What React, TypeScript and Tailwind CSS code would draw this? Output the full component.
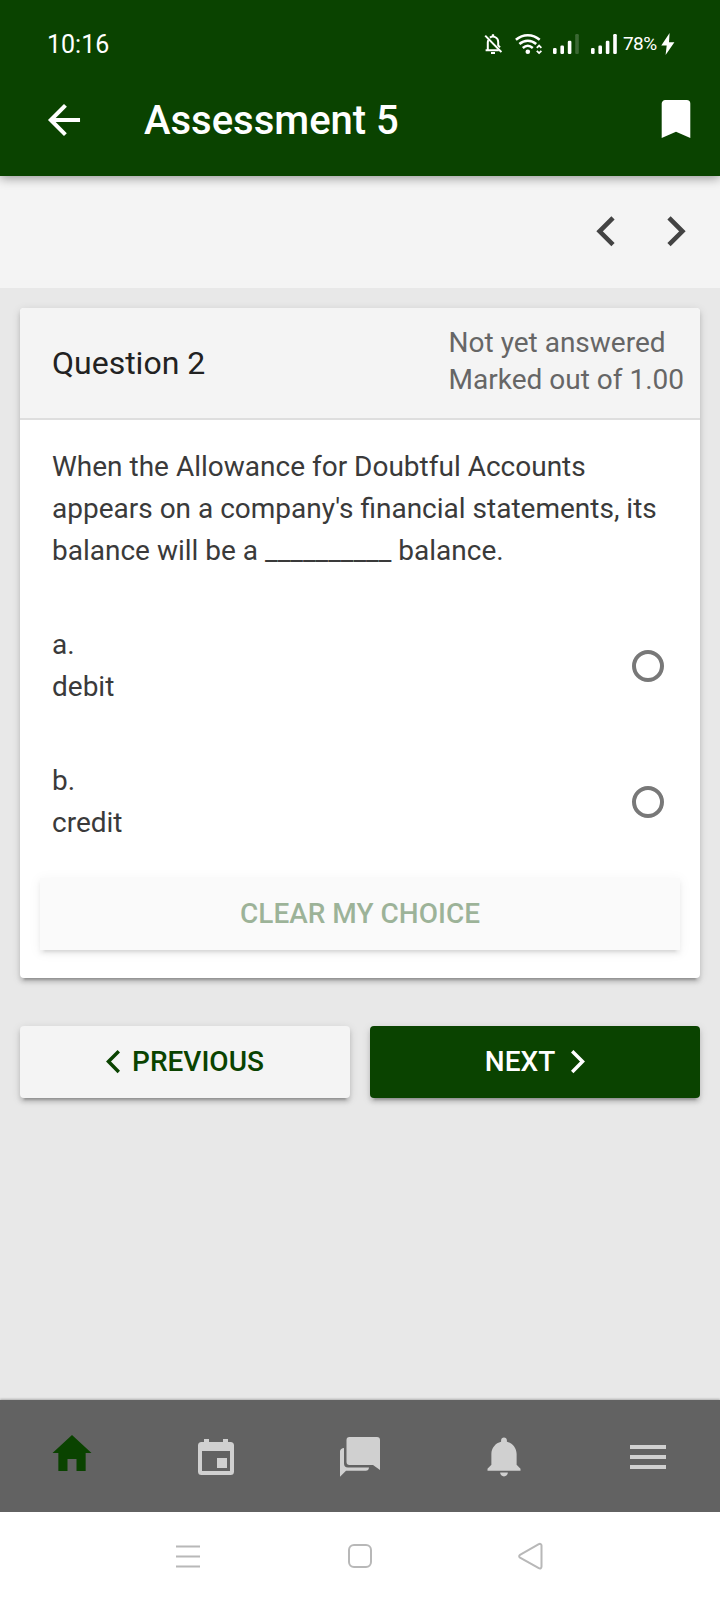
import { useState } from "react";
import type { ReactNode } from "react";
import clsx from "clsx";

const ANSWERS = [
  { letter: "a.", text: "debit" },
  { letter: "b.", text: "credit" },
];

const RAISED =
  "shadow-[0_4px_4px_rgba(0,0,0,0.14),0_6px_2px_-4px_rgba(0,0,0,0.2),0_2px_10px_rgba(0,0,0,0.12)]";

function Signal({ weak }: { weak?: boolean }) {
  return (
    <svg width="27" height="20" viewBox="0 0 27 20" fill="currentColor">
      <rect x="0" y="14" width="3.6" height="6" rx="1.2" />
      <rect x="7.4" y="11.5" width="3.6" height="8.5" rx="1.2" />
      <rect x="14.8" y="6.8" width="3.6" height="13.2" rx="1.2" />
      <rect
        x="22.2"
        y="0"
        width="3.6"
        height="20"
        rx="1.2"
        opacity={weak ? 0.2 : 1}
      />
    </svg>
  );
}

function Chevron({ dir, size }: { dir: "left" | "right"; size: "sm" | "lg" }) {
  const big = size === "lg";
  return (
    <svg
      width={big ? 19 : 14}
      height={big ? 32 : 24}
      viewBox={big ? "0 0 19 32" : "0 0 14 24"}
      fill="none"
      stroke="currentColor"
      strokeWidth={big ? 4.6 : 3.5}
      className={dir === "right" ? "-scale-x-100" : ""}
    >
      <path d={big ? "M17 1.9 3.6 15.3 17 28.700" : "M12.8 1.3 2.5 11.6l10.300 10.300"} />
    </svg>
  );
}

function StatusBar() {
  return (
    <div className="flex h-16 items-start justify-between pt-[33px] pr-[45px] pl-[47px] text-white">
      <span className="-mt-[3px] text-[25px] leading-[29px]">
        10:16
      </span>
      <div className="flex items-start">
        {/* muted bell */}
        <svg
          width="18"
          height="22"
          viewBox="0 0 18 22"
          fill="none"
          stroke="currentColor"
          strokeWidth="2"
          className="mr-[13px]"
        >
          <path d="M1.2 2.6 17.4 19" />
          <path d="M14.8 17.2H1.6M3.8 16.6V9.4c0-1 .2-1.8.6-2.5M5.9 4.6C9.6 2 14.2 4.8 14.2 9v3.4l1.8 2" />
          <path d="M9 3.6V1.2M7 20h4" strokeWidth="2.2" />
        </svg>
        <svg
          width="27"
          height="22"
          viewBox="0 0 27 22"
          fill="none"
          stroke="currentColor"
          strokeWidth="2.5"
          className="mr-[11px]"
        >
          <path d="M.9 6.8C8 .6 17.6.6 24.7 6.8" />
          <path d="M4.4 11C9.4 6.5 16.2 6.5 21.2 11" />
          <path d="M7.8 15c3.200-2.800 6.800-2.800 10 0" />
          <circle cx="12.8" cy="18.8" r="2.3" fill="currentColor" stroke="none" />
          <path d="m21.8 14.800 2.300-2.300 2.300 2.300M21.800 17.800l2.300 2.300 2.300-2.300" strokeWidth="1.8" />
        </svg>
        <div className="mt-px mr-[11px]">
          <Signal weak />
        </div>
        <div className="mt-px mr-[5px]">
          <Signal />
        </div>
        <span className="-mt-px w-[38px] text-[19px] leading-[23px] whitespace-nowrap tracking-[-0.6px]">
          78%
        </span>
        <svg width="14" height="22" viewBox="0 0 14 22" fill="currentColor">
          <path d="M8.6 0 .3 12.400H5.700L4.600 22 13.400 9.200H8z" />
        </svg>
      </div>
    </div>
  );
}

function Option({
  letter,
  text,
  checked,
  onSelect,
}: {
  letter: string;
  text: string;
  checked: boolean;
  onSelect: () => void;
}) {
  return (
    <label className="flex items-center justify-between py-[26px] pr-9 pl-8">
      <span>
        <span className="block">{letter}</span>
        <span className="block">{text}</span>
      </span>
      <input
        type="radio"
        name="answer"
        checked={checked}
        onChange={onSelect}
        className="sr-only"
      />
      <span className="flex h-8 w-8 items-center justify-center rounded-full border-4 border-[#787878]">
        {checked && <span className="h-4 w-4 rounded-full bg-[#0a4300]" />}
      </span>
    </label>
  );
}

function Tab({ active, children }: { active?: boolean; children: ReactNode }) {
  return (
    <button
      className={clsx(
        "flex flex-1 items-center justify-center",
        active ? "-translate-y-1 text-[#0a4300]" : "text-[#d0d0d0]",
      )}
    >
      {children}
    </button>
  );
}

function TabBar() {
  return (
    <nav className="flex h-28 bg-[#626262] pt-[2px] shadow-[0_-1px_2px_rgba(0,0,0,0.25)]">
      <Tab active>
        <svg width="48" height="48" viewBox="0 0 512 512" fill="currentColor">
          <path d="M208 448V320h96v128h97.600V256H464L256 64 48 256h62.400v192z" />
        </svg>
      </Tab>
      <Tab>
        <svg width="48" height="48" viewBox="0 0 48 48" fill="currentColor">
          <path
            fillRule="evenodd"
            d="M12 6h5v3h14V6h5v3h2.500A3.500 3.500 0 0 1 42 12.500v26a3.500 3.500 0 0 1-3.500 3.500h-29A3.500 3.500 0 0 1 6 38.500v-26A3.500 3.500 0 0 1 9.500 9H12zM10 18v20h28V18z"
          />
          <path d="M25 25h10v10H25z" />
        </svg>
      </Tab>
      <Tab>
        <svg width="48" height="48" viewBox="0 0 48 48" fill="currentColor">
          <path d="M13.500 4H41a3 3 0 0 1 3 3v30l-7-5H13.500a3 3 0 0 1-3-3V7a3 3 0 0 1 3-3z" />
          <path d="M8 15v15.500a4 4 0 0 0 4 4H33c0 2-1.500 3.300-3.200 3.300H10L4 43.700V18.200C4 16.300 6 15 8 15z" />
        </svg>
      </Tab>
      <Tab>
        <svg width="48" height="48" viewBox="0 0 512 512" fill="currentColor">
          <path d="M256 464c22.779 0 41.411-18.719 41.411-41.600h-82.823c0 22.881 18.633 41.600 41.412 41.600zm134.589-124.800V224.800c0-63.440-44.516-117.518-103.530-131.041V79.200c0-17.682-13.457-31.200-31.059-31.200s-31.059 13.518-31.059 31.200v14.559c-59.015 13.523-103.530 67.601-103.530 131.041v114.400L80 380.800v20.800h352v-20.800l-41.411-41.600z" />
        </svg>
      </Tab>
      <Tab>
        <svg width="48" height="48" viewBox="0 0 48 48" fill="currentColor">
          <path d="M6 12h36v4H6zM6 22h36v4H6zM6 32h36v4H6z" />
        </svg>
      </Tab>
    </nav>
  );
}

function SystemNav() {
  return (
    <div className="flex h-[88px] items-center justify-between bg-white px-44 text-[#b8b8b8]">
      <svg width="26" height="28" viewBox="0 0 26 28" fill="none" stroke="currentColor" strokeWidth="2">
        <path d="M0 4.4h24M0 14.400h24M0 24.400h24" />
      </svg>
      <svg width="24" height="24" viewBox="0 0 24 24" fill="none" stroke="currentColor" strokeWidth="2">
        <rect x="1" y="1" width="22" height="22" rx="5" />
      </svg>
      <svg
        width="26"
        height="28"
        viewBox="0 0 26 28"
        fill="none"
        stroke="currentColor"
        strokeWidth="2"
        strokeLinejoin="round"
      >
        <path d="M2 12.800 20.800 2.200c1.400-.8 2.700 0 2.700 1.400v21c0 1.600-1.300 2.400-2.700 1.600L2 15.600c-1.100-.7-1.100-2.200 0-2.800z" />
      </svg>
    </div>
  );
}

export default function App() {
  const [selected, setSelected] = useState<string | null>(null);

  return (
    <div className="flex h-[1600px] w-[720px] flex-col bg-[#e8e8e8] font-[Roboto,sans-serif] text-[28px] leading-[42px] text-[#3a3a3a]">
      <header className="relative z-10 bg-[#0a4300] shadow-[0_2px_10px_rgba(0,0,0,0.4)]">
        <StatusBar />
        <div className="flex h-28 items-center pr-[29px] pl-10 text-white">
          <button aria-label="Back">
            <svg width="48" height="48" viewBox="0 0 512 512" fill="currentColor">
              <path d="M427 234.625H167.296l119.702-119.702L256 85 85 256l171 171 29.922-29.924-118.626-119.701H427v-42.750z" />
            </svg>
          </button>
          <h1 className="ml-14 flex-1 pt-[2px] text-[40px] leading-[48px] font-medium">
            Assessment 5
          </h1>
          <button aria-label="Bookmark" className="pb-[2px]">
            <svg width="30" height="38" viewBox="0 0 30 38" fill="currentColor">
              <path d="M4.500 0h21.200a3.600 3.600 0 0 1 3.600 3.600V38L15 31.700.7 38V3.600A3.600 3.600 0 0 1 4.500 0z" />
            </svg>
          </button>
        </div>
      </header>

      <div className="flex h-28 items-center justify-end gap-[52px] bg-[#f4f4f4] pr-[34px] text-[#434343]">
        <button aria-label="Previous question">
          <Chevron dir="left" size="lg" />
        </button>
        <button aria-label="Next question">
          <Chevron dir="right" size="lg" />
        </button>
      </div>

      <main className="flex-1 p-5">
        <section className={clsx("overflow-hidden rounded-[4px] bg-white pb-7", RAISED)}>
          <div className="flex h-28 items-center justify-between border-b-2 border-[#dedede] bg-[#f4f4f4] pr-4 pl-8">
            <h2 className="text-[32px] text-[#222]">Question 2</h2>
            <div className="pb-1 leading-[37px] text-[#666]">
              <p>Not yet answered</p>
              <p>Marked out of 1.00</p>
            </div>
          </div>
          <p className="px-8 py-[26px]">
            When the Allowance for Doubtful Accounts appears on a company's
            financial statements, its balance will be a __________ balance.
          </p>
          {ANSWERS.map((answer) => (
            <Option
              key={answer.letter}
              letter={answer.letter}
              text={answer.text}
              checked={selected === answer.letter}
              onSelect={() => setSelected(answer.letter)}
            />
          ))}
          <button
            onClick={() => setSelected(null)}
            className={clsx(
              "mx-5 mt-2 block h-[72px] w-[640px] bg-[#f4f4f4] font-medium text-[#0a4300] opacity-40",
              RAISED,
            )}
          >
            CLEAR MY CHOICE
          </button>
        </section>

        <div className="mt-12 flex gap-5 font-medium">
          <button
            className={clsx(
              "flex h-[72px] flex-1 items-center justify-center gap-3 rounded-[4px] bg-[#f4f4f4] text-[#0a4300]",
              RAISED,
            )}
          >
            <Chevron dir="left" size="sm" />
            PREVIOUS
          </button>
          <button
            className={clsx(
              "flex h-[72px] flex-1 items-center justify-center gap-4 rounded-[4px] bg-[#0a4300] text-white",
              RAISED,
            )}
          >
            NEXT
            <Chevron dir="right" size="sm" />
          </button>
        </div>
      </main>

      <TabBar />
      <SystemNav />
    </div>
  );
}
